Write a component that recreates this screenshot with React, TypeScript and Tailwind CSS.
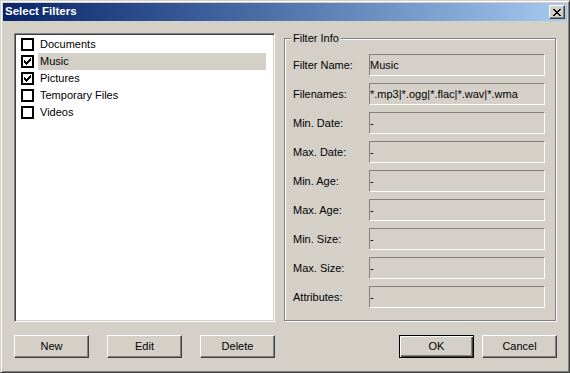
import React, { useState } from 'react';

type Filter = {
    name: string;
    checked: boolean;
};

const filters: Filter[] = [
    { name: 'Documents', checked: false },
    { name: 'Music', checked: true },
    { name: 'Pictures', checked: true },
    { name: 'Temporary Files', checked: false },
    { name: 'Videos', checked: false },
];

const fields: [string, string][] = [
    ['Filter Name:', 'Music'],
    ['Filenames:', '*.mp3|*.ogg|*.flac|*.wav|*.wma'],
    ['Min. Date:', '-'],
    ['Max. Date:', '-'],
    ['Min. Age:', '-'],
    ['Max. Age:', '-'],
    ['Min. Size:', '-'],
    ['Max. Size:', '-'],
    ['Attributes:', '-'],
];

const CheckMark = () => (
    <svg width="7" height="7" viewBox="0 0 7 7" shapeRendering="crispEdges">
        <path
            d="M6 0h1v3h-1zM5 1h1v3h-1zM4 2h1v3h-1zM0 2h1v3h-1zM1 3h1v3h-1zM2 4h1v3h-1zM3 3h1v3h-1z"
            fill="#000"
        />
    </svg>
);

const CheckBox = ({ checked }: { checked: boolean }) => (
    <div className="w-[13px] h-[13px] border-2 border-black bg-white flex items-center justify-center shrink-0">
        {checked && <CheckMark />}
    </div>
);

const Button = ({ label, isDefault }: { label: string; isDefault?: boolean }) => (
    <button
        className={
            isDefault
                ? 'w-[75px] h-[23px] bg-[#d4d0c8] border border-black shadow-[inset_1px_1px_0_#fff,inset_-1px_-1px_0_#404040,inset_-2px_-2px_0_#808080] text-black'
                : 'w-[75px] h-[23px] bg-[#d4d0c8] border border-t-white border-l-white border-r-[#404040] border-b-[#404040] shadow-[inset_-1px_-1px_0_#808080] text-black'
        }
    >
        {label}
    </button>
);

export default function App() {
    const [selected, setSelected] = useState(1);

    return (
        <div
            className="w-[570px] h-[373px] bg-[#d4d0c8] border border-t-[#d4d0c8] border-l-[#d4d0c8] border-r-[#404040] border-b-[#404040] shadow-[inset_1px_1px_0_#fff,inset_-1px_-1px_0_#808080] p-[2px] flex flex-col text-[11px] text-black"
            style={{ fontFamily: '"Liberation Sans", Arial, sans-serif' }}
        >
            {/* title bar */}
            <div className="h-[18px] bg-gradient-to-r from-[#0a246a] to-[#a6caf0] flex items-center justify-between pl-[2px] pr-[2px]">
                <span className="text-white font-bold text-[11.5px] leading-none">Select Filters</span>
                <div className="w-[16px] h-[14px] bg-[#d4d0c8] border border-t-white border-l-white border-r-[#404040] border-b-[#404040] shadow-[inset_-1px_-1px_0_#808080] flex items-center justify-center">
                    <svg width="8" height="7" viewBox="0 0 8 7" shapeRendering="crispEdges">
                        <path
                            d="M0 0h2v1h-2zM6 0h2v1h-2zM1 1h2v1h-2zM5 1h2v1h-2zM2 2h4v1h-4zM3 3h2v1h-2zM2 4h4v1h-4zM1 5h2v1h-2zM5 5h2v1h-2zM0 6h2v1h-2zM6 6h2v1h-2z"
                            fill="#000"
                        />
                    </svg>
                </div>
            </div>

            {/* body */}
            <div className="flex pl-[11px] pt-[12px]">
                <div className="w-[261px] h-[289px] bg-white border border-t-[#808080] border-l-[#808080] border-r-white border-b-white shadow-[inset_1px_1px_0_#404040,inset_-1px_-1px_0_#d4d0c8] pt-[2px] pl-[6px] pr-[8px]">
                    {filters.map((f, i) => (
                        <div key={f.name} className="h-[17px] flex items-center" onClick={() => setSelected(i)}>
                            <CheckBox checked={f.checked} />
                            <div
                                className={
                                    'ml-[4px] flex-1 h-[17px] flex items-center pl-[2px] ' +
                                    (i === selected ? 'bg-[#d4d0c8]' : '')
                                }
                            >
                                {f.name}
                            </div>
                        </div>
                    ))}
                </div>

                <div className="relative ml-[9px] mt-[5px] w-[272px] h-[283px] border border-[#808080] shadow-[inset_1px_1px_0_#fff,1px_1px_0_#fff] pl-[8px] pt-[15px] flex flex-col gap-[7px]">
                    <span className="absolute -top-[7px] left-[6px] bg-[#d4d0c8] px-[2px] leading-[13px]">Filter Info</span>
                    {fields.map(([label, value]) => (
                        <div key={label} className="flex items-center h-[22px]">
                            <span className="w-[76px] shrink-0">{label}</span>
                            <div className="w-[176px] h-[22px] border border-t-[#808080] border-l-[#808080] border-r-white border-b-white flex items-center overflow-hidden whitespace-nowrap">
                                {value}
                            </div>
                        </div>
                    ))}
                </div>
            </div>

            {/* buttons */}
            <div className="flex justify-between pl-[11px] pr-[10px] mt-[13px]">
                <div className="flex gap-[18px]">
                    <Button label="New" />
                    <Button label="Edit" />
                    <Button label="Delete" />
                </div>
                <div className="flex gap-[8px]">
                    <Button label="OK" isDefault />
                    <Button label="Cancel" />
                </div>
            </div>
        </div>
    );
}
